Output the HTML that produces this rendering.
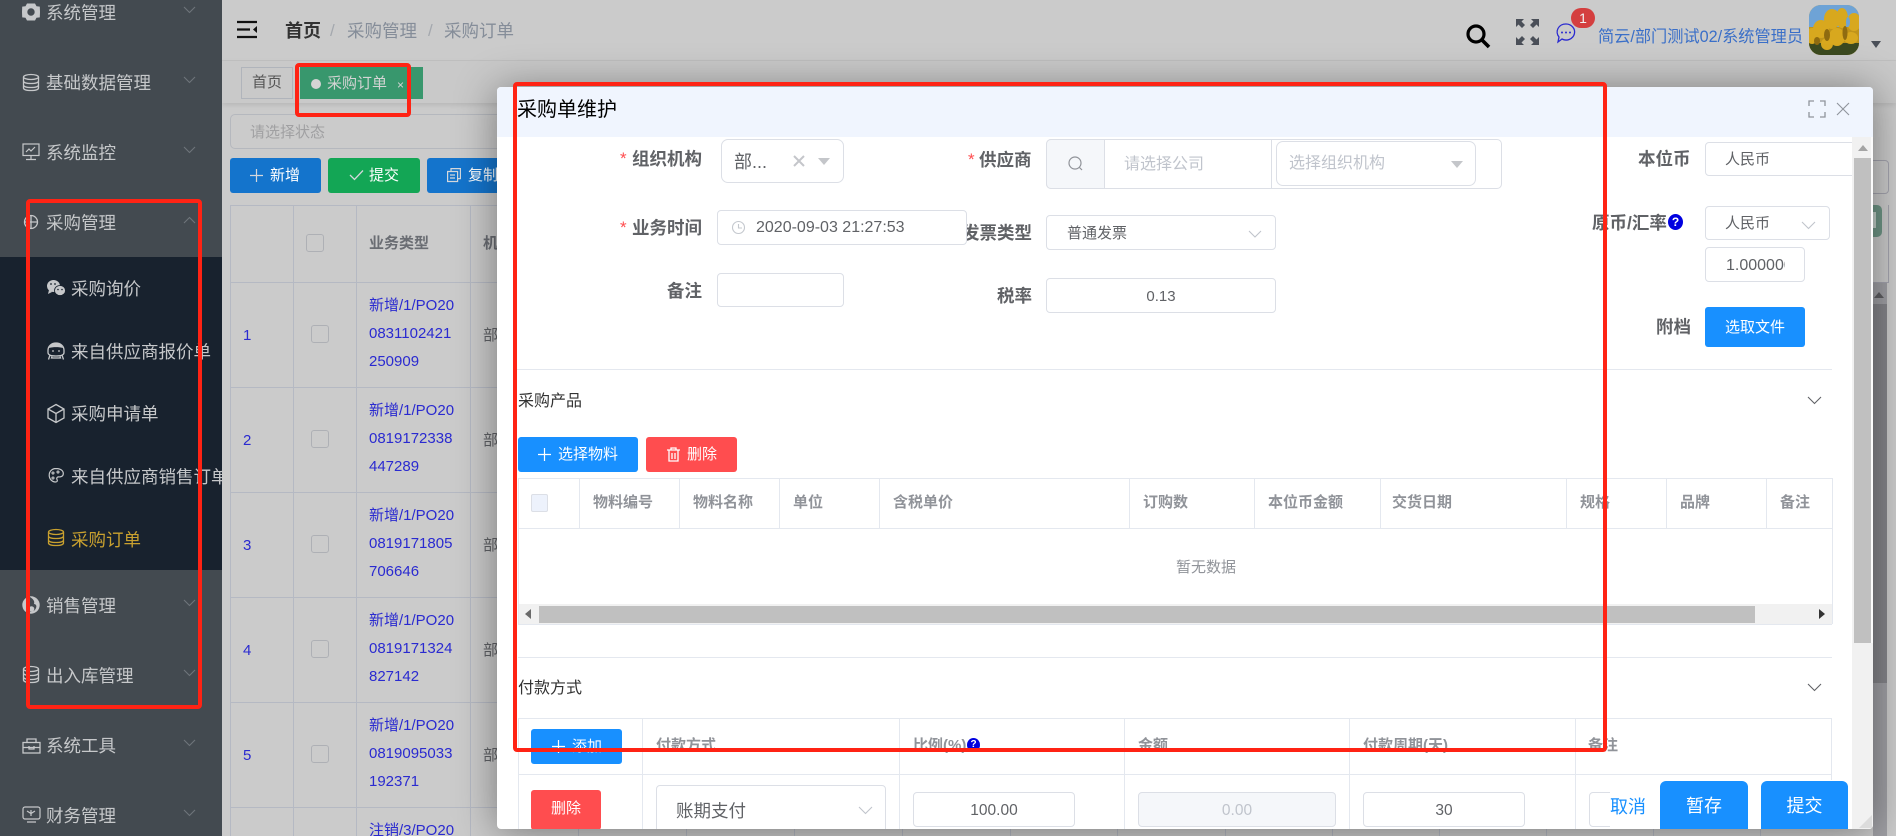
<!DOCTYPE html>
<html lang="zh"><head><meta charset="utf-8"><title>采购单维护</title>
<style>
html,body{margin:0;padding:0;width:1896px;height:836px;overflow:hidden;background:#cbcbcb}
body{font-family:"Liberation Sans","Noto Sans CJK SC",sans-serif;position:relative}
div,svg,span.a{position:absolute;box-sizing:border-box}
.t{white-space:nowrap;line-height:30px;height:30px;margin-top:1px}
.m{font-size:17.5px;color:#c6c8ca}
.l{font-size:17.5px;font-weight:bold;color:#606266}
.b{border:1px solid #dcdfe6;border-radius:4px;background:#fff}
.btn{border-radius:3px;color:#fff;font-size:15px;line-height:36px;text-align:center}
.h{font-size:15px;font-weight:bold;color:#909399}
.lk{font-size:15px;color:#2a2ad0}
.v{background:#e4e8ef;width:1px}
.hl{background:#e4e8ef;height:1px}
.pv{background:#b5b9c3;width:1px}
.ph{background:#b5b9c3;height:1px}
.r{border:4px solid #ff2314;border-radius:4px;z-index:50}
svg{overflow:visible}
</style></head><body>

<!-- Underlying page -->
<div style="left:222px;top:0;width:1674px;height:60px;background:#cbcbcb"></div>
<div style="left:222px;top:60px;width:1674px;height:1px;background:#c2c2c2"></div>
<div style="left:222px;top:61px;width:1674px;height:42px;background:#c9c9c9;box-shadow:0 2px 5px rgba(0,0,0,.1)"></div>

<svg style="left:237px;top:20px" width="21" height="19" viewBox="0 0 21 19"><path d="M0 2h20M0 9.500h13M0 17h20" stroke="#111" stroke-width="2.200"/><path d="M20 6v7l-4-3.500z" fill="#111"/></svg>
<div class="t" style="left:285px;top:15px;font-size:18px;font-weight:bold;color:#333">首页</div>
<div class="t" style="left:330px;top:15px;font-size:17px;color:#a4a8ae">/</div>
<div class="t" style="left:347px;top:15px;font-size:17.5px;color:#858d99">采购管理</div>
<div class="t" style="left:428px;top:15px;font-size:17px;color:#a4a8ae">/</div>
<div class="t" style="left:444px;top:15px;font-size:17.5px;color:#858d99">采购订单</div>

<svg style="left:1465px;top:23px" width="26" height="26" viewBox="0 0 26 26"><circle cx="11" cy="11" r="8" fill="none" stroke="#000" stroke-width="3.200"/><path d="M17 17l7 7" stroke="#000" stroke-width="3.600"/></svg>
<svg style="left:1516px;top:19px" width="23" height="26" viewBox="0 0 23 26" fill="#4a4f58"><path d="M0 0h8L5.500 2.500 9 6 6 9 2.500 5.500 0 8zM23 0v8l-2.500-2.500L17 9l-3-3 3.500-3.500L15 0zM0 26v-8l2.500 2.500L6 17l3 3-3.500 3.500L8 26zM23 26h-8l2.500-2.500L14 20l3-3 3.500 3.500L23 18z"/></svg>
<svg style="left:1556px;top:23px" width="20" height="21" viewBox="0 0 20 21"><path d="M10 1a8.500 8 0 1 1-4 15l-4 3 1-5A8.500 8 0 0 1 10 1z" fill="none" stroke="#2a2ad0" stroke-width="1.300"/><circle cx="6" cy="9.500" r="1" fill="#2a2ad0"/><circle cx="10" cy="9.500" r="1" fill="#2a2ad0"/><circle cx="14" cy="9.500" r="1" fill="#2a2ad0"/></svg>
<div style="left:1571px;top:8px;width:24px;height:20px;border-radius:10px;background:#d43f3f;color:#f2f2f2;font-size:14px;line-height:20px;text-align:center">1</div>
<div class="t" style="left:1598px;top:21px;font-size:16.2px;color:#3a6fc8">简云/部门测试02/系统管理员</div>
<svg style="left:1809px;top:5px" width="50" height="50" viewBox="0 0 50 50">
<clipPath id="av"><rect width="50" height="50" rx="12"/></clipPath>
<g clip-path="url(#av)"><rect width="50" height="50" fill="#c0941a"/><rect width="50" height="22" fill="#6ea3d6"/><rect y="38" width="50" height="12" fill="#3c4a20"/>
<g fill="#d8a81e"><ellipse cx="23" cy="14" rx="8" ry="10"/><ellipse cx="33" cy="13" rx="6" ry="10"/><ellipse cx="45" cy="17" rx="7" ry="9"/><ellipse cx="12" cy="24" rx="8" ry="9"/><ellipse cx="3" cy="31" rx="6" ry="8"/><ellipse cx="28" cy="32" rx="8" ry="9"/><ellipse cx="42" cy="33" rx="7" ry="6"/><ellipse cx="18" cy="39" rx="6" ry="6"/></g>
<g fill="#8f6b10"><ellipse cx="18" cy="30" rx="3" ry="6"/><ellipse cx="36" cy="28" rx="2.500" ry="7"/><ellipse cx="8" cy="36" rx="3" ry="4"/></g>
<ellipse cx="39" cy="17" rx="2" ry="5" fill="#6ea3d6"/></g></svg>
<svg style="left:1871px;top:41px" width="10" height="7"><path d="M0 0h10L5 7z" fill="#4a4f58"/></svg>

<div class="t" style="left:241px;top:67px;width:52px;height:32px;border:1px solid #b0b4bb;font-size:15px;line-height:30px;text-align:center;color:#555;margin-top:0">首页</div>
<div style="left:300px;top:67px;width:123px;height:32px;background:#38976d"></div>
<div style="left:311px;top:79px;width:10px;height:10px;border-radius:50%;background:#d4d4d4"></div>
<div class="t" style="left:327px;top:68px;font-size:15px;color:#d4d4d4">采购订单</div>
<div class="t" style="left:397px;top:69px;font-size:12px;color:#d4d4d4">×</div>

<div style="left:230px;top:114px;width:440px;height:35px;border:1px solid #b5b8be;border-radius:5px"></div>
<div class="t" style="left:250px;top:117px;font-size:15px;color:#a0a0a2">请选择状态</div>

<div class="btn" style="left:230px;top:158px;width:91px;height:35px;background:#1474cc;text-align:left;padding-left:40px">新增</div>
<svg style="left:250px;top:169px" width="13" height="13" stroke="#d4d8dc" stroke-width="1.200"><path d="M6.500 0v13M0 6.500h13"/></svg>
<div class="btn" style="left:328px;top:158px;width:92px;height:35px;background:#13a655;text-align:left;padding-left:41px">提交</div>
<svg style="left:350px;top:170px" width="13" height="10" fill="none" stroke="#d4d8dc" stroke-width="1.300"><path d="M0 5l4.500 4.500L13 .5"/></svg>
<div class="btn" style="left:427px;top:158px;width:91px;height:35px;background:#1474cc;text-align:left;padding-left:41px">复制</div>
<svg style="left:447px;top:168px" width="14" height="14" fill="none" stroke="#d4d8dc" stroke-width="1.200"><path d="M4 3V.6h9.400v10H11M.6 3.500h10v10H.6zM3 7h5M3 10h5"/></svg>

<div class="ph" style="left:230px;top:205px;width:300px"></div>
<div class="ph" style="left:230px;top:282px;width:300px"></div>
<div class="ph" style="left:230px;top:387px;width:300px"></div>
<div class="ph" style="left:230px;top:492px;width:300px"></div>
<div class="ph" style="left:230px;top:597px;width:300px"></div>
<div class="ph" style="left:230px;top:702px;width:300px"></div>
<div class="ph" style="left:230px;top:807px;width:300px"></div>
<div class="pv" style="left:230px;top:205px;height:631px"></div>
<div class="pv" style="left:293px;top:205px;height:631px"></div>
<div class="pv" style="left:356px;top:205px;height:631px"></div>
<div class="pv" style="left:470px;top:205px;height:631px"></div>

<div style="left:306px;top:234px;width:18px;height:18px;border:1px solid #aeb0b5;border-radius:3px"></div>
<div style="left:311px;top:325px;width:18px;height:18px;border:1px solid #aeb0b5;border-radius:3px"></div>
<div style="left:311px;top:430px;width:18px;height:18px;border:1px solid #aeb0b5;border-radius:3px"></div>
<div style="left:311px;top:535px;width:18px;height:18px;border:1px solid #aeb0b5;border-radius:3px"></div>
<div style="left:311px;top:640px;width:18px;height:18px;border:1px solid #aeb0b5;border-radius:3px"></div>
<div style="left:311px;top:745px;width:18px;height:18px;border:1px solid #aeb0b5;border-radius:3px"></div>

<div class="t" style="left:369px;top:228px;font-size:15px;font-weight:bold;color:#6a6d73">业务类型</div>
<div class="t" style="left:483px;top:228px;font-size:15px;font-weight:bold;color:#6a6d73">机构</div>

<div class="t lk" style="left:243px;top:320px">1</div>
<div class="t lk" style="left:243px;top:425px">2</div>
<div class="t lk" style="left:243px;top:530px">3</div>
<div class="t lk" style="left:243px;top:635px">4</div>
<div class="t lk" style="left:243px;top:740px">5</div>

<div class="lk" style="left:369px;top:292px;line-height:28px;white-space:nowrap">新增/1/PO20<br>0831102421<br>250909</div>
<div class="lk" style="left:369px;top:397px;line-height:28px;white-space:nowrap">新增/1/PO20<br>0819172338<br>447289</div>
<div class="lk" style="left:369px;top:502px;line-height:28px;white-space:nowrap">新增/1/PO20<br>0819171805<br>706646</div>
<div class="lk" style="left:369px;top:607px;line-height:28px;white-space:nowrap">新增/1/PO20<br>0819171324<br>827142</div>
<div class="lk" style="left:369px;top:712px;line-height:28px;white-space:nowrap">新增/1/PO20<br>0819095033<br>192371</div>
<div class="lk" style="left:369px;top:817px;line-height:28px;white-space:nowrap">注销/3/PO20</div>

<div class="t" style="left:483px;top:320px;font-size:15px;color:#606266">部门</div>
<div class="t" style="left:483px;top:425px;font-size:15px;color:#606266">部门</div>
<div class="t" style="left:483px;top:530px;font-size:15px;color:#606266">部门</div>
<div class="t" style="left:483px;top:635px;font-size:15px;color:#606266">部门</div>
<div class="t" style="left:483px;top:740px;font-size:15px;color:#606266">部门</div>

<!-- lines beneath modal bottom -->
<div class="pv" style="left:578px;top:807px;height:29px"></div><div class="pv" style="left:686px;top:807px;height:29px"></div><div class="pv" style="left:794px;top:807px;height:29px"></div><div class="pv" style="left:902px;top:807px;height:29px"></div><div class="pv" style="left:1010px;top:807px;height:29px"></div><div class="pv" style="left:1117px;top:807px;height:29px"></div><div class="pv" style="left:1225px;top:807px;height:29px"></div><div class="pv" style="left:1332px;top:807px;height:29px"></div><div class="pv" style="left:1439px;top:807px;height:29px"></div><div class="pv" style="left:1546px;top:807px;height:29px"></div><div class="pv" style="left:1653px;top:807px;height:29px"></div><div class="pv" style="left:1760px;top:807px;height:29px"></div>

<!-- right of modal -->
<div style="left:1850px;top:160px;width:39px;height:34px;border:1px solid #a4a4ae;border-radius:4px"></div>
<div style="left:1850px;top:205px;width:39px;height:78px;border-right:1px solid #a4a4ae"></div>
<div style="left:1850px;top:282px;width:39px;height:1px;background:#a4a4ae"></div>
<div style="left:1850px;top:205px;width:32px;height:32px;background:#6f9686;border-radius:5px"></div>
<div style="left:1873px;top:212px;width:3px;height:16px;background:#c2cfc9"></div>
<div style="left:1873px;top:283px;width:14px;height:553px;background:#a0a0a5"></div>
<div style="left:1873px;top:304px;width:14px;height:379px;background:#85858a"></div>
<svg style="left:1874px;top:292px" width="10" height="6"><path d="M5 0l5 6H0z" fill="#5e5e62"/></svg>

<!-- Sidebar -->
<div style="left:0;top:0;width:222px;height:836px;background:#434a50;overflow:hidden">
<div style="left:0;top:257px;width:222px;height:313px;background:#18222e"></div>
<div class="t m" style="left:46px;top:-3px">系统管理</div>
<div class="t m" style="left:46px;top:67px">基础数据管理</div>
<div class="t m" style="left:46px;top:137px">系统监控</div>
<div class="t m" style="left:46px;top:207px">采购管理</div>
<div class="t m" style="left:71px;top:273px">采购询价</div>
<div class="t m" style="left:71px;top:336px">来自供应商报价单</div>
<div class="t m" style="left:71px;top:398px">采购申请单</div>
<div class="t m" style="left:71px;top:461px">来自供应商销售订单</div>
<div class="t m" style="left:71px;top:524px;color:#c9a12f">采购订单</div>
<div class="t m" style="left:46px;top:590px">销售管理</div>
<div class="t m" style="left:46px;top:660px">出入库管理</div>
<div class="t m" style="left:46px;top:730px">系统工具</div>
<div class="t m" style="left:46px;top:800px">财务管理</div>
<svg style="left:0;top:0" width="222" height="836" fill="none" stroke="#6e747a" stroke-width="1.100">
<path d="M184 7l5.500 5.500L195 7M184 77l5.500 5.500L195 77M184 147l5.500 5.500L195 147M184 223l5.500-5.500 5.500 5.500M184 600l5.500 5.500L195 600M184 670l5.500 5.500L195 670M184 740l5.500 5.500L195 740M184 810l5.500 5.500L195 810"/>
<!-- gear -->
<path fill-rule="evenodd" fill="#c6c8ca" stroke="none" d="M27 3.500h8l1.500 2.800 3.300.3L40 12l-.200 5.400-3.300.3L35 20.500h-8l-1.500-2.800-3.300-.3L22 12l.2-5.400 3.300-.3zM31 8.300a3.700 3.700 0 1 0 0 7.400 3.700 3.700 0 0 0 0-7.400z"/>
<g stroke="#c6c8ca">
<g stroke-width="1.300"><ellipse cx="31" cy="77" rx="7.500" ry="2.500"/><path d="M23.500 77v11c0 1.500 3 2.500 7.500 2.500s7.500-1 7.500-2.500V77M23.500 81c0 1.500 3 2.500 7.500 2.500s7.500-1 7.500-2.500M23.500 85c0 1.500 3 2.500 7.500 2.500s7.500-1 7.500-2.500"/></g>
<g stroke-width="1.200"><rect x="23" y="144" width="16" height="11.500"/><path d="M26 152l3-3 2 2 4-4M31 155.500v4M26 159.500h10"/></g>
<g stroke-width="1.300"><circle cx="31" cy="222" r="6.500"/><path d="M24.500 222h13M31 215.500v13"/></g>
<!-- toolbox -->
<g stroke-width="1.300"><rect x="23" y="742.500" width="17" height="10.500"/><path d="M27 742.500v-3.500h9v3.500M23 747.500h17M29 746v3h5v-3"/></g>
<!-- monitor -->
<g stroke-width="1.200"><rect x="23" y="807" width="17" height="12" rx="2"/><path d="M27 811l4 2.500 4-2.500M31 810v6M27 822h9"/></g>
<g stroke-width="1.300"><ellipse cx="31" cy="669" rx="7.500" ry="2.500"/><path d="M23.500 669v11c0 1.500 3 2.500 7.500 2.500s7.500-1 7.500-2.500V669M23.500 673c0 1.500 3 2.500 7.500 2.500s7.500-1 7.500-2.500M23.500 677c0 1.500 3 2.500 7.500 2.500s7.500-1 7.500-2.500"/></g>
<!-- robot face -->
<g stroke-width="1.300"><path d="M48 350.500c0-4.500 3.500-7.500 8-7.500s8 3 8 7.500v2c0 2.500-3.500 3.500-8 3.500s-8-1-8-3.500zM50 355l-1.500 4.500M62 355l1.500 4.500M52 356.500l-.5 1.500h9l-.5-1.500"/></g>
<path d="M49 348c1.500-3.800 4-5 7-5s5.500 1.200 7 5c-4-1.200-10-1.200-14 0z" fill="#c6c8ca" stroke="none"/>
<circle cx="53" cy="351" r=".9" fill="#c6c8ca" stroke="none"/><circle cx="59" cy="351" r=".9" fill="#c6c8ca" stroke="none"/>
<!-- cube -->
<g stroke-width="1.300"><path d="M56 404.500l8 4.500v9l-8 4.500-8-4.500v-9zM48 409l8 4.500 8-4.500M56 413.500v9"/></g>
<!-- palette -->
<path stroke-width="1.200" d="M56 468.500c-4 0-6.800 3-6.800 6.800s3 6.700 6.300 6.700c1.800 0 2.200-1.200 1.500-2.400-.8-1.500.2-2.800 1.800-2.700 2.300.2 4.500-.8 4.500-3.300 0-3-3-5.100-7.300-5.100z"/>
<circle cx="53" cy="473" r="1" stroke-width="1.100"/><circle cx="58" cy="472" r="1" stroke-width="1.100"/><circle cx="53" cy="478" r="1" stroke-width="1.100"/>
</g>
<g stroke="#c9a12f" stroke-width="1.300"><ellipse cx="56" cy="532" rx="7.500" ry="2.500"/><path d="M48.500 532v11c0 1.500 3 2.500 7.500 2.500s7.500-1 7.500-2.500V532M48.500 536c0 1.500 3 2.500 7.500 2.500s7.500-1 7.500-2.500M48.500 540c0 1.500 3 2.500 7.500 2.500s7.500-1 7.500-2.500"/></g>
<!-- wechat -->
<g stroke="none"><ellipse cx="53.500" cy="286" rx="6.500" ry="6" fill="#c6c8ca"/><path d="M49 290l-1 4 4-2z" fill="#c6c8ca"/>
<ellipse cx="60" cy="290.500" rx="5.500" ry="5" stroke="#18222e" stroke-width=".8" fill="#c6c8ca"/>
<circle cx="51" cy="284" r=".9" fill="#18222e"/><circle cx="55" cy="284" r=".9" fill="#18222e"/><circle cx="58" cy="289.500" r=".8" fill="#18222e"/><circle cx="62" cy="289.500" r=".8" fill="#18222e"/></g>
<!-- flame globe -->
<g stroke="none"><circle cx="31" cy="605" r="8.700" fill="#c6c8ca"/><path d="M30 597c3 2 5 4 4 7 2 0 3 2 2 4-1 3-4 4-7 4 1-2 1-4-.5-5.500C27 605 28 600 30 597z" fill="#434a50"/><circle cx="31.500" cy="609" r="2.800" fill="#c6c8ca"/></g>
</svg>
</div>

<!-- Modal -->
<div style="left:497px;top:87px;width:1376px;height:742px;background:#fff;border-radius:4px;overflow:hidden;box-shadow:0 3px 42px rgba(0,0,0,.42);z-index:10">
<div style="left:-497px;top:-87px;width:1896px;height:836px">
<div style="left:497px;top:87px;width:1376px;height:50px;background:#f0f5fe"></div>
<div class="t" style="left:517px;top:94px;font-size:20px;color:#000">采购单维护</div>
<svg style="left:1808px;top:100px" width="18" height="18" fill="none" stroke="#8f949c" stroke-width="1.300"><path d="M1 6V1h5M12 1h5v5M17 12v5h-5M6 17H1v-5"/></svg>
<svg style="left:1837px;top:103px" width="12" height="12" fill="none" stroke="#8f949c" stroke-width="1.100"><path d="M0 0l12 12M12 0L0 12"/></svg>

<!-- left form -->
<div class="t" style="left:620px;top:143px;font-size:17px;color:#ff4d4f">*</div>
<div class="t l" style="left:632px;top:143px">组织机构</div>
<div class="b" style="left:721px;top:139px;width:123px;height:44px;border-radius:7px"></div>
<div class="t" style="left:734px;top:146px;font-size:18px;color:#606266">部...</div>
<svg style="left:794px;top:156px" width="10" height="10" fill="none" stroke="#c4c6ca" stroke-width="2"><path d="M0 0l10 10M10 0L0 10"/></svg>
<svg style="left:818px;top:158px" width="12" height="7"><path d="M0 0h12L6 7z" fill="#c4c6ca"/></svg>

<div class="t" style="left:620px;top:212px;font-size:17px;color:#ff4d4f">*</div>
<div class="t l" style="left:632px;top:212px">业务时间</div>
<div class="t l" style="left:962px;top:217px">发票类型</div>
<div class="b" style="left:717px;top:210px;width:250px;height:35px"></div>
<svg style="left:732px;top:221px" width="13" height="13" fill="none" stroke="#c4c8ce" stroke-width="1.100"><circle cx="6.500" cy="6.500" r="6"/><path d="M6.500 3v4h3.500"/></svg>
<div class="t" style="left:756px;top:212px;font-size:16px;color:#606266">2020-09-03 21:27:53</div>

<div class="t l" style="left:667px;top:275px">备注</div>
<div class="b" style="left:717px;top:273px;width:127px;height:34px"></div>

<!-- middle form -->
<div class="t" style="left:968px;top:144px;font-size:17px;color:#ff4d4f">*</div>
<div class="t l" style="left:979px;top:144px">供应商</div>
<div class="b" style="left:1046px;top:139px;width:456px;height:50px;border-radius:5px"></div>
<div style="left:1046px;top:139px;width:59px;height:50px;background:#f5f7fa;border:1px solid #dcdfe6;border-radius:5px 0 0 5px"></div>
<svg style="left:1068px;top:156px" width="15" height="15" fill="none" stroke="#909399" stroke-width="1.200"><circle cx="7" cy="7" r="6"/><path d="M11 11l3 3"/></svg>
<div class="t" style="left:1124px;top:149px;font-size:16px;color:#c0c4cc">请选择公司</div>
<div style="left:1271px;top:139px;width:1px;height:50px;background:#dcdfe6"></div>
<div class="b" style="left:1276px;top:141px;width:200px;height:45px;border-radius:7px"></div>
<div class="t" style="left:1289px;top:148px;font-size:16px;color:#c0c4cc">选择组织机构</div>
<svg style="left:1451px;top:161px" width="12" height="7"><path d="M0 0h12L6 7z" fill="#c4c6ca"/></svg>

<div class="b" style="left:1046px;top:215px;width:230px;height:35px"></div>
<div class="t" style="left:1067px;top:218px;font-size:15px;color:#606266">普通发票</div>
<svg style="left:1249px;top:231px" width="12" height="7" fill="none" stroke="#c0c4cc" stroke-width="1.100"><path d="M0 0l6 6 6-6"/></svg>

<div class="t l" style="left:997px;top:280px">税率</div>
<div class="b" style="left:1046px;top:278px;width:230px;height:35px"></div>
<div class="t" style="left:1046px;top:281px;width:230px;text-align:center;font-size:15px;color:#606266">0.13</div>

<!-- right form -->
<div class="t l" style="left:1638px;top:143px">本位币</div>
<div class="b" style="left:1705px;top:142px;width:170px;height:34px"></div>
<div class="t" style="left:1725px;top:144px;font-size:15px;color:#606266">人民币</div>
<div class="t l" style="left:1592px;top:207px">原币/汇率</div>
<div style="left:1668px;top:214px;width:15px;height:16px;border-radius:50%;background:#0000e0;color:#fff;font-size:12px;font-weight:bold;line-height:16px;text-align:center">?</div>
<div class="b" style="left:1705px;top:206px;width:125px;height:34px"></div>
<div class="t" style="left:1725px;top:208px;font-size:15px;color:#606266">人民币</div>
<svg style="left:1802px;top:222px" width="13" height="7" fill="none" stroke="#c0c4cc" stroke-width="1.100"><path d="M0 0l6.500 6.500L13 0"/></svg>
<div class="b" style="left:1705px;top:247px;width:100px;height:35px"></div>
<div class="t" style="left:1726px;top:250px;width:59px;overflow:hidden;font-size:16px;color:#606266">1.000000</div>
<div class="t l" style="left:1656px;top:311px">附档</div>
<div class="btn" style="left:1705px;top:307px;width:100px;height:40px;background:#1890ff;line-height:41px">选取文件</div>

<div class="hl" style="left:517px;top:369px;width:1315px"></div>
<div class="t" style="left:518px;top:386px;font-size:16px;color:#333">采购产品</div>
<svg style="left:1808px;top:397px" width="13" height="7" fill="none" stroke="#606266" stroke-width="1.100"><path d="M0 0l6.500 6.500L13 0"/></svg>

<div class="btn" style="left:518px;top:437px;width:120px;height:35px;background:#1890ff;text-align:left;padding-left:40px">选择物料</div>
<svg style="left:538px;top:448px" width="13" height="13" stroke="#fff" stroke-width="1.200"><path d="M6.500 0v13M0 6.500h13"/></svg>
<div class="btn" style="left:646px;top:437px;width:91px;height:35px;background:#ff4d4f;text-align:left;padding-left:41px">删除</div>
<svg style="left:667px;top:447px" width="13" height="15" fill="none" stroke="#fff" stroke-width="1.300"><path d="M0 3h13M4 3V1h5v2M2 3v11h9V3M5 6v6M8 6v6"/></svg>

<!-- product table -->
<div class="hl" style="left:518px;top:478px;width:1314px"></div>
<div class="hl" style="left:518px;top:528px;width:1314px"></div>
<div class="hl" style="left:518px;top:624px;width:1314px"></div>
<div class="v" style="left:518px;top:478px;height:146px"></div>
<div class="v" style="left:1832px;top:478px;height:146px"></div>
<div class="v" style="left:579px;top:478px;height:50px"></div>
<div class="v" style="left:679px;top:478px;height:50px"></div>
<div class="v" style="left:779px;top:478px;height:50px"></div>
<div class="v" style="left:879px;top:478px;height:50px"></div>
<div class="v" style="left:1129px;top:478px;height:50px"></div>
<div class="v" style="left:1254px;top:478px;height:50px"></div>
<div class="v" style="left:1380px;top:478px;height:50px"></div>
<div class="v" style="left:1566px;top:478px;height:50px"></div>
<div class="v" style="left:1666px;top:478px;height:50px"></div>
<div class="v" style="left:1766px;top:478px;height:50px"></div>
<div style="left:531px;top:494px;width:17px;height:18px;background:#edf2fc;border:1px solid #dcdfe6;border-radius:2px"></div>
<div class="t h" style="left:593px;top:487px">物料编号</div>
<div class="t h" style="left:693px;top:487px">物料名称</div>
<div class="t h" style="left:793px;top:487px">单位</div>
<div class="t h" style="left:893px;top:487px">含税单价</div>
<div class="t h" style="left:1143px;top:487px">订购数</div>
<div class="t h" style="left:1268px;top:487px">本位币金额</div>
<div class="t h" style="left:1392px;top:487px">交货日期</div>
<div class="t h" style="left:1580px;top:487px">规格</div>
<div class="t h" style="left:1680px;top:487px">品牌</div>
<div class="t h" style="left:1780px;top:487px">备注</div>
<div class="t" style="left:1176px;top:552px;font-size:15px;color:#909399">暂无数据</div>
<div style="left:519px;top:604px;width:1313px;height:20px;background:#f1f1f1"></div>
<div style="left:539px;top:606px;width:1216px;height:17px;background:#c0c0c0"></div>
<svg style="left:525px;top:609px" width="6" height="10"><path d="M6 0v10L0 5z" fill="#6a6a6a"/></svg>
<svg style="left:1819px;top:609px" width="6" height="10"><path d="M0 0v10l6-5z" fill="#333"/></svg>

<div class="hl" style="left:518px;top:657px;width:1314px"></div>
<div class="t" style="left:518px;top:673px;font-size:16px;color:#333">付款方式</div>
<svg style="left:1808px;top:684px" width="13" height="7" fill="none" stroke="#606266" stroke-width="1.100"><path d="M0 0l6.500 6.500L13 0"/></svg>

<!-- payment table -->
<div class="hl" style="left:518px;top:718px;width:1314px"></div>
<div class="hl" style="left:518px;top:774px;width:1314px"></div>
<div class="v" style="left:518px;top:718px;height:112px"></div>
<div class="v" style="left:642px;top:718px;height:112px"></div>
<div class="v" style="left:899px;top:718px;height:112px"></div>
<div class="v" style="left:1124px;top:718px;height:112px"></div>
<div class="v" style="left:1349px;top:718px;height:112px"></div>
<div class="v" style="left:1575px;top:718px;height:112px"></div>
<div class="v" style="left:1831px;top:718px;height:112px"></div>
<div class="btn" style="left:531px;top:729px;width:91px;height:35px;background:#1890ff;text-align:left;padding-left:41px">添加</div>
<svg style="left:552px;top:740px" width="13" height="13" stroke="#fff" stroke-width="1.200"><path d="M6.500 0v13M0 6.500h13"/></svg>
<div class="t h" style="left:656px;top:730px">付款方式</div>
<div class="t h" style="left:913px;top:730px">比例(%)</div>
<div style="left:967px;top:738px;width:13px;height:14px;border-radius:50%;background:#0000e0;color:#fff;font-size:10px;font-weight:bold;line-height:14px;text-align:center">?</div>
<div class="t h" style="left:1138px;top:730px">金额</div>
<div class="t h" style="left:1363px;top:730px">付款周期(天)</div>
<div class="t h" style="left:1588px;top:730px">备注</div>

<div class="btn" style="left:531px;top:790px;width:70px;height:40px;background:#ff4d4f;line-height:38px">删除</div>
<div class="b" style="left:656px;top:785px;width:230px;height:60px"></div>
<div class="t" style="left:676px;top:795px;font-size:17.5px;color:#606266">账期支付</div>
<svg style="left:859px;top:807px" width="13" height="7" fill="none" stroke="#c0c4cc" stroke-width="1.100"><path d="M0 0l6.500 6.500L13 0"/></svg>
<div class="b" style="left:913px;top:792px;width:162px;height:35px"></div>
<div class="t" style="left:913px;top:795px;width:162px;text-align:center;font-size:15.5px;color:#606266">100.00</div>
<div class="b" style="left:1138px;top:792px;width:198px;height:35px;background:#f5f7fa"></div>
<div class="t" style="left:1138px;top:795px;width:198px;text-align:center;font-size:15.5px;color:#c0c4cc">0.00</div>
<div class="b" style="left:1363px;top:792px;width:162px;height:35px"></div>
<div class="t" style="left:1363px;top:795px;width:162px;text-align:center;font-size:15.5px;color:#606266">30</div>
<div class="b" style="left:1589px;top:792px;width:60px;height:35px"></div>

<!-- footer -->
<div style="left:1610px;top:780px;width:243px;height:50px;background:#fff"></div>
<div class="t" style="left:1610px;top:791px;font-size:18px;color:#1890ff">取消</div>
<div style="left:1660px;top:781px;width:88px;height:50px;background:#1890ff;border-radius:6px 6px 0 0;color:#fff;font-size:18px;line-height:50px;text-align:center">暂存</div>
<div style="left:1761px;top:781px;width:87px;height:50px;background:#1890ff;border-radius:6px 6px 0 0;color:#fff;font-size:18px;line-height:50px;text-align:center">提交</div>

<!-- modal scrollbar -->
<div style="left:1852px;top:137px;width:21px;height:692px;background:#f1f1f1"></div>
<div style="left:1871px;top:137px;width:2px;height:506px;background:#fbfbfb"></div>
<div style="left:1854px;top:158px;width:17px;height:485px;background:#c0c0c0"></div>
<svg style="left:1858px;top:145px" width="10" height="6"><path d="M5 0l5 6H0z" fill="#a4a4a4"/></svg>
<svg style="left:1859px;top:815px" width="13" height="13"><path d="M13 0v13H0z" fill="#dcdcdc"/></svg>
</div></div>

<!-- Red annotations -->
<div class="r" style="left:295px;top:63px;width:116px;height:54px"></div>
<div class="r" style="left:26px;top:199px;width:176px;height:510px"></div>
<div class="r" style="left:513px;top:82px;width:1094px;height:670px"></div>
</body></html>
